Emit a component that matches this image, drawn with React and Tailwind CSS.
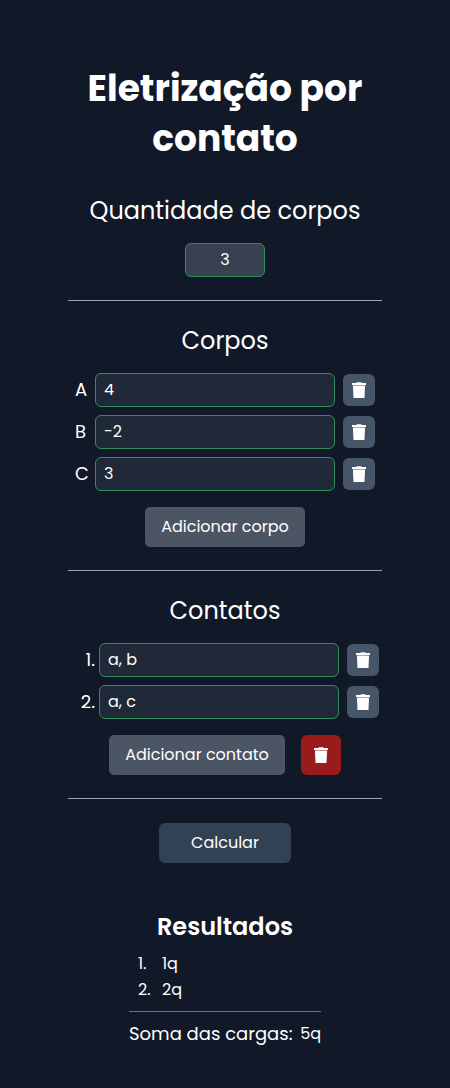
const field =
  "h-[34px] rounded-md border border-[#2f8f55] outline-none text-base text-white";

function TrashIcon() {
  return (
    <svg width="14" height="16" viewBox="0 0 14 16" fill="currentColor" aria-hidden="true">
      <path d="M0 1h4.200L5 .200h4L9.800 1H14v2H0z" />
      <path d="M.9 3.500h12.200l-.6 12a.5.500 0 0 1-.5.500H2a.5.500 0 0 1-.5-.500z" />
    </svg>
  );
}

function DeleteButton({ label }) {
  return (
    <button
      aria-label={label}
      className="ml-2 flex size-8 shrink-0 items-center justify-center rounded-md bg-[#475569]"
    >
      <TrashIcon />
    </button>
  );
}

function Row({ label, labelClass, value }) {
  return (
    <div className="flex h-[34px] items-center">
      <span className={labelClass}>{label}</span>
      <input
        aria-label={label}
        defaultValue={value}
        className={`${field} w-60 bg-[#1f2937] px-2 pb-0.5`}
      />
      <DeleteButton label={`Remover ${label}`} />
    </div>
  );
}

function Divider() {
  return <hr className="w-[314px] border-t border-[#9ca3af]" />;
}

export default function App() {
  return (
    <main className="flex h-[1088px] w-full flex-col items-center bg-[#111827] pt-16 font-['Poppins','Inter',sans-serif] text-white">
      <h1 className="flex flex-col items-center text-4xl leading-[50px] font-bold whitespace-nowrap">
        <span>Eletrização por</span>
        <span>contato</span>
      </h1>
      <h2 className="mt-[29px] h-9 text-2xl leading-9 whitespace-nowrap">Quantidade de corpos</h2>
      <input
        aria-label="Quantidade de corpos"
        defaultValue="3"
        className={`${field} mt-[14px] mb-[23px] w-20 bg-[#374151] pb-0.5 text-center`}
      />
      <Divider />

      <h2 className="mt-[22px] text-2xl leading-9">Corpos</h2>
      <div className="mt-[14px] flex flex-col gap-2">
        <Row label="A" labelClass="w-5 text-lg" value="4" />
        <Row label="B" labelClass="w-5 text-lg" value="-2" />
        <Row label="C" labelClass="w-5 text-lg" value="3" />
      </div>
      <button className="mt-4 mb-[23px] h-10 w-40 rounded-[5px] bg-[#4b5563] text-base whitespace-nowrap">
        <span>Adicionar corpo</span>
      </button>
      <Divider />

      <h2 className="mt-[22px] text-2xl leading-9">Contatos</h2>
      <div className="mt-[14px] flex flex-col gap-2 pl-2">
        <Row label="1." labelClass="flex w-5 justify-end pr-1 text-lg" value="a, b" />
        <Row label="2." labelClass="flex w-5 justify-end pr-1 text-lg" value="a, c" />
      </div>
      <div className="mt-4 mb-[23px] flex gap-4">
        <button className="h-10 w-44 rounded-[5px] bg-[#4b5563] text-base whitespace-nowrap">
          <span>Adicionar contato</span>
        </button>
        <button
          aria-label="Remover contatos"
          className="flex size-10 items-center justify-center rounded-md bg-[#991b1b]"
        >
          <TrashIcon />
        </button>
      </div>
      <Divider />

      <button className="mt-6 h-10 w-[132px] rounded-md bg-[#334155] text-base">
        <span>Calcular</span>
      </button>

      <section className="mt-[46px] flex w-48 flex-col">
        <h2 className="text-center text-2xl leading-9 font-semibold">Resultados</h2>
        <ol className="mt-[6px] text-base leading-[26px]">
          <li className="flex pl-[9px]">
            <span className="w-6">1.</span>1q
          </li>
          <li className="flex pl-[9px]">
            <span className="w-6">2.</span>2q
          </li>
        </ol>
        <hr className="mt-2 border-t border-[#6b7280]" />
        <p className="mt-2 flex items-center justify-between leading-7 whitespace-nowrap">
          <span className="text-lg">Soma das cargas:</span>
          <span>5q</span>
        </p>
      </section>
    </main>
  );
}
